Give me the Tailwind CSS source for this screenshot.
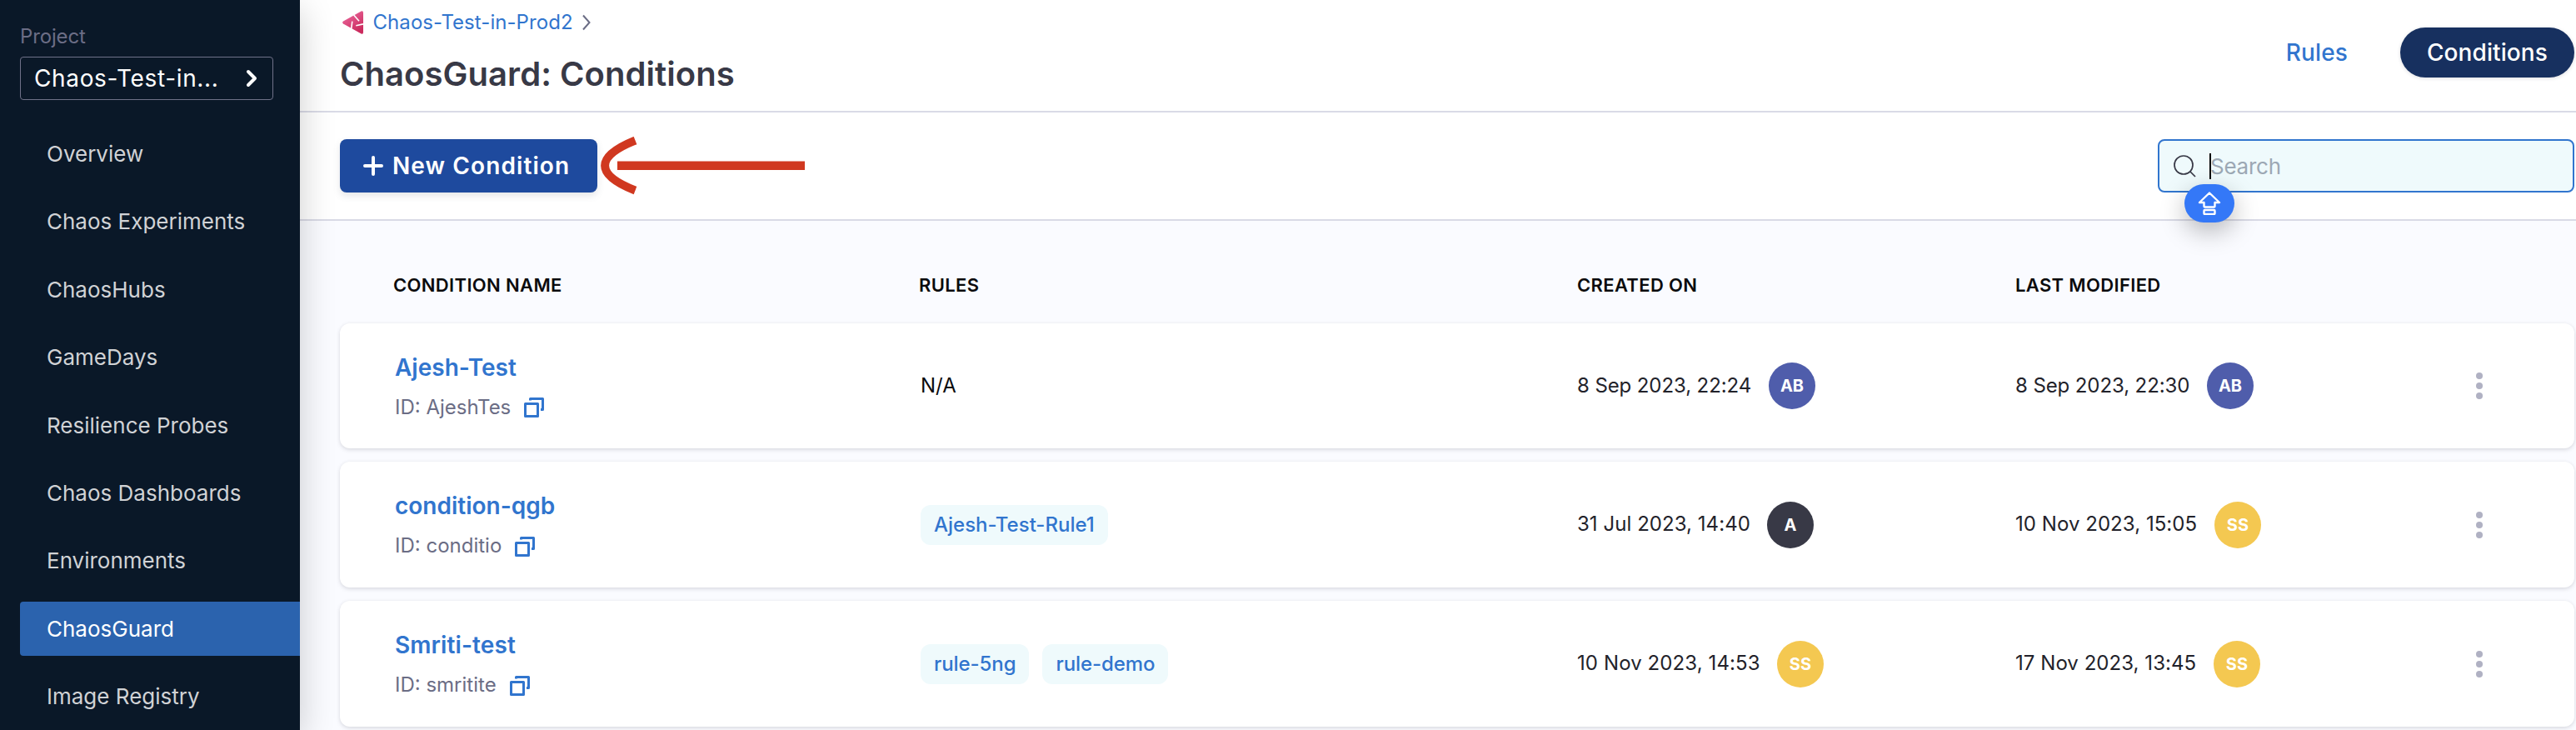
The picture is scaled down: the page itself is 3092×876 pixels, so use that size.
<!DOCTYPE html>
<html lang="en">
<head>
<meta charset="utf-8">
<title>ChaosGuard: Conditions</title>
<script src="https://cdn.jsdelivr.net/npm/@tailwindcss/browser@4"></script>
</head>
<body class="flex h-[876px] w-[3092px] overflow-hidden bg-white font-['Inter',sans-serif] text-[24px] leading-[40px]">
<svg class="hidden">
  <symbol id="copy" viewBox="0 0 24 24"><path d="M1.5 7.5h15v15h-15z M7.5 3.5V1.5h15v13h-2.500" fill="none" stroke="#3175ce" stroke-width="3" stroke-linejoin="round"/></symbol>
  <symbol id="dots" viewBox="0 0 8 32"><circle cx="4" cy="4" r="4"/><circle cx="4" cy="16" r="4"/><circle cx="4" cy="28" r="4"/></symbol>
</svg>

<aside class="z-10 flex w-[360px] shrink-0 flex-col bg-[#0a1828] pt-[28px] pl-6 shadow-[0_12px_40px_rgba(0,0,0,0.2)]">
  <div class="text-[24px] leading-8 tracking-[-0.15px] text-[#6b6d85]">Project</div>
  <div class="mt-[8px] flex h-[52px] w-[304px] items-center justify-between rounded-[4px] border border-[#6f7188] pr-[18px] pl-4 text-[28px] tracking-[0.65px] text-white">
    <span>Chaos-Test-in...</span>
    <svg class="h-[22px] w-[14px]" viewBox="0 0 14 22" fill="none" stroke="#fff" stroke-width="4" stroke-linecap="round" stroke-linejoin="round"><path d="M3 3l8 8-8 8"/></svg>
  </div>
  <nav class="mt-8 flex flex-col gap-4 text-[26px] leading-[65.4px] text-[#d0d2d5]">
    <a class="h-[65.4px] pl-8">Overview</a>
    <a class="h-[65.4px] pl-8">Chaos Experiments</a>
    <a class="h-[65.4px] pl-8">ChaosHubs</a>
    <a class="h-[65.4px] pl-8">GameDays</a>
    <a class="h-[65.4px] pl-8">Resilience Probes</a>
    <a class="h-[65.4px] pl-8">Chaos Dashboards</a>
    <a class="h-[65.4px] pl-8">Environments</a>
    <a class="h-[65.4px] rounded-l-[4px] bg-[#2b63ae] pl-8 text-white">ChaosGuard</a>
    <a class="h-[65.4px] pl-8">Image Registry</a>
  </nav>
</aside>

<main class="flex min-w-0 grow flex-col bg-[#fafbff]">
  <header class="flex h-[135px] shrink-0 justify-between border-b-2 border-[#d9dae6] bg-white pr-0.5 pl-12">
    <div class="pt-[12px]">
      <div class="flex h-[30px] items-center">
        <svg class="ml-[3px] h-[28px] w-[25px]" viewBox="0 0 25 28">
          <defs><linearGradient id="lg" x1="0" y1="0" x2="0.6" y2="1"><stop offset="0" stop-color="#ee6fa4"/><stop offset="1" stop-color="#cb2b5e"/></linearGradient></defs>
          <path d="M1 12.500L22.500.4Q25-.4 25 2.200V25.800Q25 28.500 22.600 27.500L1 15.500Q-.8 14 1 12.500Z" fill="url(#lg)"/>
          <path d="M13.600 5l6.400 7.200M25 15.900l-8.700 1.900M11.800 12.600l-1.100 9" stroke="#fff" stroke-width="1.600" fill="none"/>
        </svg>
        <a class="ml-[11.500px] leading-[30px] tracking-[0.06px] text-[#3175ce]">Chaos-Test-in-Prod2</a>
        <svg class="ml-[10px] h-[20px] w-[12px]" viewBox="0 0 12 20" fill="none" stroke="#6b6d85" stroke-width="2"><path d="M2 1.500L9.500 10L2 18.500"/></svg>
      </div>
      <h1 class="mt-[22.500px] text-[40px] leading-[48px] font-semibold tracking-[0.050px] text-[#383946]">ChaosGuard: Conditions</h1>
    </div>
    <div class="mt-[33px] flex h-[60px] items-center gap-[63px] text-[28px] font-medium tracking-[0.1px]">
      <a class="text-[#3175ce]">Rules</a>
      <a class="flex h-[60px] items-center rounded-full bg-[#17305f] px-8 text-white shadow-[0_1px_4px_rgba(40,41,61,0.16)]">Conditions</a>
    </div>
  </header>

  <section class="relative flex h-[130px] shrink-0 items-center justify-between border-b-2 border-[#d9dae6] bg-white pr-0.5 pl-12">
    <div class="flex items-center">
      <button class="flex h-16 w-[309px] items-center rounded-lg bg-[#1e4a9e] pl-[28px] text-[28px] font-semibold tracking-[1.100px] whitespace-nowrap text-white shadow-[0_4px_8px_rgba(96,97,112,0.16)]">
        <svg class="mr-[11px] h-6 w-6 shrink-0" viewBox="0 0 24 24" stroke="#fff" stroke-width="4" stroke-linecap="round"><path d="M12 2v20M2 12h20"/></svg>New Condition
      </button>
      <svg class="ml-1 h-[70px] w-[246px]" viewBox="721 165 246 70" fill="none" stroke="#d03820"><path d="M762.500 169.500C714 189 714 210.500 762.500 229.500" stroke-width="10"/><path d="M741 199.800H966" stroke-width="10.600"/></svg>
    </div>
    <div class="flex h-16 w-[500px] items-center rounded-lg border-2 border-[#3175ce] bg-[#effafc] pl-[17px] text-[26px] text-[#9ca8b4]">
      <svg class="h-[27px] w-[27px]" viewBox="0 0 27 27" fill="none" stroke="#383946" stroke-width="1.700"><circle cx="12" cy="12" r="11"/><path d="M19.500 19.500l6.500 6.500"/></svg>
      <span class="ml-4 h-[31px] w-0.5 bg-black"></span>
      <span class="ml-[-1px] pt-px tracking-[-0.25px]">Search</span>
    </div>
    <!-- Caps-lock indicator hanging off the text caret -->
    <div class="absolute top-[86px] right-[410px] flex h-[46px] w-[60px] items-center justify-center rounded-full bg-[#3478f7] shadow-[0_10px_30px_rgba(0,0,0,0.28)]">
      <svg class="mr-px h-[28px] w-[28px]" viewBox="0 0 28 28" fill="none" stroke="#fff" stroke-width="2.400" stroke-linejoin="round"><path d="M14 1.500L26 13H20.500V17.500Q20.500 18.500 19.500 18.500H8.500Q7.500 18.500 7.500 17.500V13H2Z"/><rect x="7.500" y="22" width="13" height="5" rx="1"/></svg>
    </div>
  </section>

  <section class="flex flex-col pr-0.5 pl-12">
    <div class="grid h-[123px] grid-cols-[631px_790px_526px_1fr] items-center pt-[30px] pl-16 text-[22px] font-semibold tracking-[0.350px] text-[#0b0b0d]">
      <div>CONDITION NAME</div><div>RULES</div><div>CREATED ON</div><div>LAST MODIFIED</div>
    </div>

    <div class="flex flex-col gap-4 text-[#22222a]">
      <div class="grid h-[150px] grid-cols-[630px_789px_526px_522px_1fr] items-center rounded-xl bg-white pl-[66px] shadow-[0_0_4px_rgba(40,41,61,0.04),0_2px_5px_rgba(96,97,112,0.18)]">
        <div class="flex flex-col gap-2 pt-[3px]">
          <a class="text-[28px] font-semibold text-[#3175ce]">Ajesh-Test</a>
          <div class="flex items-center text-[#6b6d85]">ID: AjeshTes<svg class="mt-px ml-4 h-6 w-6"><use href="#copy"/></svg></div>
        </div>
        <div class="pl-px text-[#0b0b0d]">N/A</div>
        <div class="flex items-center tracking-[-0.100px]"><span class="w-[230px] pb-px">8 Sep 2023, 22:24</span><span class="flex h-14 w-14 items-center justify-center rounded-full bg-[#4f5dab] text-[20px] font-bold text-white">AB</span></div>
        <div class="flex items-center tracking-[-0.100px]"><span class="w-[230px] pb-px">8 Sep 2023, 22:30</span><span class="flex h-14 w-14 items-center justify-center rounded-full bg-[#4f5dab] text-[20px] font-bold text-white">AB</span></div>
        <svg class="ml-[31px] h-8 w-2 fill-[#b0b1c3]"><use href="#dots"/></svg>
      </div>

      <div class="grid h-[151px] grid-cols-[630px_789px_526px_522px_1fr] items-center rounded-xl bg-white pt-px pl-[66px] shadow-[0_0_4px_rgba(40,41,61,0.04),0_2px_5px_rgba(96,97,112,0.18)]">
        <div class="flex flex-col gap-2 pt-[2px]">
          <a class="text-[28px] font-semibold text-[#3175ce]">condition-qgb</a>
          <div class="flex items-center text-[#6b6d85]">ID: conditio<svg class="mt-px ml-4 h-6 w-6"><use href="#copy"/></svg></div>
        </div>
        <div class="flex gap-4 pl-px font-medium text-[#3175ce]"><span class="h-12 rounded-xl bg-[#effafc] px-4 leading-[47px]">Ajesh-Test-Rule1</span></div>
        <div class="flex items-center tracking-[0.050px]"><span class="w-[228px] pb-0.5">31 Jul 2023, 14:40</span><span class="flex h-14 w-14 items-center justify-center rounded-full bg-[#383946] text-[20px] font-bold text-white">A</span></div>
        <div class="flex items-center tracking-[0.050px]"><span class="w-[239px] pb-0.5">10 Nov 2023, 15:05</span><span class="flex h-14 w-14 items-center justify-center rounded-full bg-[#f4c851] text-[20px] font-bold text-white">SS</span></div>
        <svg class="ml-[31px] h-8 w-2 fill-[#b0b1c3]"><use href="#dots"/></svg>
      </div>

      <div class="grid h-[151px] grid-cols-[630px_789px_526px_522px_1fr] items-center rounded-xl bg-white pt-px pl-[66px] shadow-[0_0_4px_rgba(40,41,61,0.04),0_2px_5px_rgba(96,97,112,0.18)]">
        <div class="flex flex-col gap-2 pt-[2px]">
          <a class="text-[28px] font-semibold tracking-[0.100px] text-[#3175ce]">Smriti-test</a>
          <div class="flex items-center text-[#6b6d85]">ID: smritite<svg class="mt-px ml-4 h-6 w-6"><use href="#copy"/></svg></div>
        </div>
        <div class="flex gap-4 pl-px font-medium tracking-[-0.080px] text-[#3175ce]"><span class="h-12 rounded-xl bg-[#effafc] px-4 leading-[47px]">rule-5ng</span><span class="h-12 rounded-xl bg-[#effafc] px-4 leading-[47px]">rule-demo</span></div>
        <div class="flex items-center tracking-[0.100px]"><span class="w-[240px] pb-0.5">10 Nov 2023, 14:53</span><span class="flex h-14 w-14 items-center justify-center rounded-full bg-[#f4c851] text-[20px] font-bold text-white">SS</span></div>
        <div class="flex items-center tracking-[0.050px]"><span class="w-[238px] pb-0.5">17 Nov 2023, 13:45</span><span class="flex h-14 w-14 items-center justify-center rounded-full bg-[#f4c851] text-[20px] font-bold text-white">SS</span></div>
        <svg class="ml-[31px] h-8 w-2 fill-[#b0b1c3]"><use href="#dots"/></svg>
      </div>
    </div>
  </section>
</main>
</body>
</html>
